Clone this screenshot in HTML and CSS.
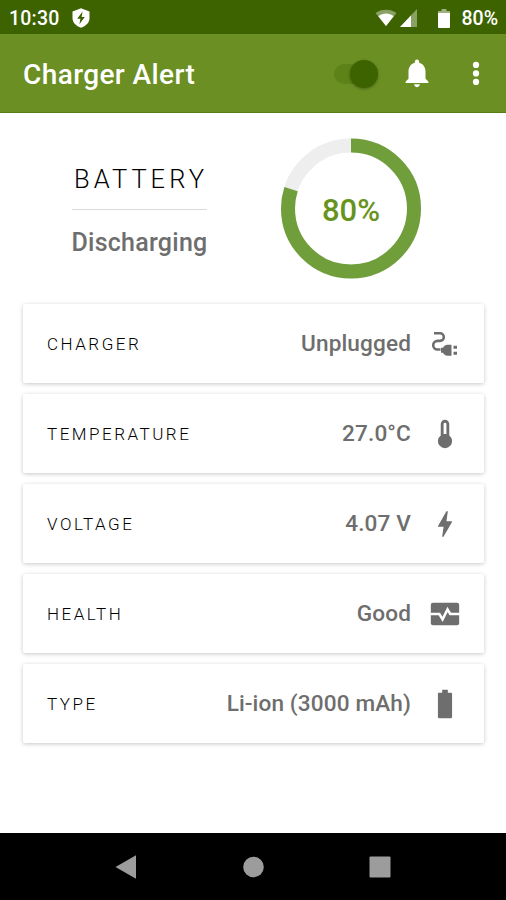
FILE: index.html
```html
<!DOCTYPE html>
<html lang="en">
<head>
    <meta charset="UTF-8">
    <meta name="viewport" content="width=device-width, initial-scale=1.0">
    <title>Charger Alert</title>
    <link rel="stylesheet" href="styles.css">
</head>
<body>
    <div class="screen">
        <div class="status-bar">
            <span class="time">10:30</span>
            <svg class="shield" viewBox="0 0 18 20">
                <path fill="#fff" d="M9 .3 17.500 3.600V10c0 4.600-3.600 8-8.500 9.800C4.100 18 .5 14.600.5 10V3.600z"/>
                <path fill="#3c6300" d="M10.600 3.600 5.200 10.800H8.400L7.400 16.200 12.800 9H9.600z"/>
            </svg>
            <div class="status-icons">
                <svg class="wifi" viewBox="0 0 22 18">
                    <path fill="#fff" opacity=".4" d="M.5 4C6-.5 16-.5 21.500 4L11 17z"/>
                    <path fill="#fff" d="M3.300 7.300C8 3.600 14 3.600 18.700 7.300L11 17z"/>
                </svg>
                <svg class="signal" viewBox="0 0 18 18">
                    <path fill="#fff" opacity=".4" d="M0 18 17 0V18z"/>
                    <path fill="#fff" d="M0 18 11 6.500V18z"/>
                </svg>
                <svg class="battery-small" viewBox="0 0 12 19">
                    <path fill="#fff" opacity=".5" d="M3.500 0h5v2H12v3H0V2h3.500z"/>
                    <path fill="#fff" d="M0 4h12v14a1 1 0 0 1-1 1H1a1 1 0 0 1-1-1z"/>
                </svg>
                <span class="level">80%</span>
            </div>
        </div>

        <header class="app-bar">
            <h1>Charger Alert</h1>
            <div class="switch"><span class="thumb"></span></div>
            <svg class="icon bell" viewBox="0 0 24 24">
                <path d="M12 22c1.100 0 2-.9 2-2h-4c0 1.100.9 2 2 2zm6-6v-5c0-3.070-1.630-5.640-4.500-6.320V4c0-.83-.67-1.500-1.500-1.500s-1.500.67-1.500 1.500v.68C7.640 5.360 6 7.920 6 11v5l-2 2v1h16v-1l-2-2z"/>
            </svg>
            <svg class="icon more" viewBox="0 0 24 24">
                <circle cx="12" cy="6.300" r="2.200"/>
                <circle cx="12" cy="12.300" r="2.200"/>
                <circle cx="12" cy="18.300" r="2.200"/>
            </svg>
        </header>

        <main>
            <section class="summary">
                <div class="state">
                    <h2>BATTERY</h2>
                    <p>Discharging</p>
                </div>
                <div class="gauge">
                    <svg viewBox="0 0 142 142">
                        <circle class="track" cx="71" cy="70.500" r="63"/>
                        <circle class="progress" cx="71" cy="70.500" r="63" pathLength="100" stroke-dasharray="80 100" transform="rotate(-90 71 70.500)"/>
                    </svg>
                    <span class="percent">80%</span>
                </div>
            </section>

            <ul class="cards">
                <li class="card">
                    <span class="label">CHARGER</span>
                    <span class="value">Unplugged</span>
                    <svg class="icon" viewBox="0 0 34 34">
                        <path fill="none" stroke="#6e6e6e" stroke-width="2.600" d="M6 6.300H12a3.800 3.800 0 0 1 0 7.600H9.500a4.300 4.300 0 0 0 0 8.600H12.500"/>
                        <path d="M13 20.800h2c1-2 2.500-3 4.500-3h4v11h-4c-2 0-3.500-1-4.500-3h-2zM25.500 18.800H29v3h-3.500zM25.500 24.800H29v3h-3.500z"/>
                    </svg>
                </li>
                <li class="card">
                    <span class="label">TEMPERATURE</span>
                    <span class="value">27.0°C</span>
                    <svg class="icon" viewBox="0 0 24 24">
                        <path d="M15 13V5a3 3 0 0 0-6 0v8a5 5 0 1 0 6 0M12 4a1 1 0 0 1 1 1v7h-2V5a1 1 0 0 1 1-1z"/>
                    </svg>
                </li>
                <li class="card">
                    <span class="label">VOLTAGE</span>
                    <span class="value">4.07 V</span>
                    <svg class="icon" viewBox="0 0 24 24">
                        <path d="M11 21h-1l1-7H7.500c-.88 0-.33-.75-.31-.78C8.480 10.940 10.420 7.540 13.010 3h1l-1 7h3.510c.4 0 .62.19.4.66C12.970 17.550 11 21 11 21z"/>
                    </svg>
                </li>
                <li class="card">
                    <span class="label">HEALTH</span>
                    <span class="value">Good</span>
                    <svg class="icon" viewBox="0 0 24 24">
                        <rect x="2" y="4" width="20" height="16" rx="1.500"/>
                        <path fill="none" stroke="#fff" stroke-width="1.800" d="M1.500 12H8L10.300 15.800 13.800 8.800 15.700 12H22.500"/>
                    </svg>
                </li>
                <li class="card">
                    <span class="label">TYPE</span>
                    <span class="value">Li-ion (3000 mAh)</span>
                    <svg class="icon" viewBox="0 0 24 24">
                        <path d="M16.200 4H14V2h-4v2H7.800C7.300 4 7 4.300 7 4.800v16.400c0 .5.300.8.800.8h8.400c.5 0 .8-.3.8-.8V4.800c0-.5-.3-.8-.8-.8z"/>
                    </svg>
                </li>
            </ul>
        </main>

        <nav class="nav-bar">
            <svg viewBox="0 0 24 24"><path d="M22 .3V23.700L1.500 12z"/></svg>
            <svg viewBox="0 0 24 24"><circle cx="12.500" cy="12" r="10.300"/></svg>
            <svg viewBox="0 0 24 24"><rect x="1.500" y="1.500" width="21" height="21" rx="1"/></svg>
        </nav>
    </div>
</body>
</html>
```

FILE: styles.css
```css
* {
    box-sizing: border-box;
}

body {
    margin: 0;
    font-family: Roboto, "Liberation Sans", sans-serif;
    background: #fff;
}

svg {
    display: block;
    flex-shrink: 0;
}

.screen {
    display: flex;
    flex-direction: column;
    height: 900px;
}

.status-bar {
    display: flex;
    align-items: center;
    height: 34px;
    padding: 2px 8px 0 9px;
    background: #3c6300;
    color: #fff;
    font-size: 19.5px;
    font-weight: 500;
}

.time {
    letter-spacing: 0.2px;
}

.shield {
    width: 18px;
    height: 20px;
    margin-left: 13px;
}

.status-icons {
    display: flex;
    align-items: center;
    margin-left: auto;
}

.wifi {
    width: 22px;
    height: 18px;
}

.signal {
    width: 18px;
    height: 18px;
    margin-left: 3px;
}

.battery-small {
    width: 12px;
    height: 19px;
    margin-left: 20px;
}

.level {
    margin-left: 11px;
}

.app-bar {
    display: flex;
    align-items: center;
    height: 79px;
    padding: 0 13px 0 23px;
    background: #6b8f23;
    border-bottom: 1px solid #587c12;
    color: #fff;
}

.app-bar h1 {
    margin: 3px auto 0 0;
    font-size: 28px;
    font-weight: 500;
    letter-spacing: 0.4px;
}

.icon {
    width: 34px;
    height: 34px;
    fill: #6e6e6e;
}

.app-bar .icon {
    fill: #fff;
}

.switch {
    display: flex;
    align-items: center;
    justify-content: flex-end;
    width: 40px;
    height: 20px;
    margin: 1px 26px 0 0;
    border-radius: 10px;
    background: #5d8217;
}

.thumb {
    width: 28px;
    height: 28px;
    margin-right: -4px;
    border-radius: 50%;
    background: #3c6300;
    box-shadow: 0 1px 3px rgba(0, 0, 0, 0.3);
}

.more {
    margin-left: 25px;
}

main {
    flex: 1;
    padding: 25px 22px 0 23px;
}

.summary {
    display: flex;
    align-items: center;
    padding-left: 49px;
}

.state {
    display: flex;
    flex-direction: column;
    align-items: center;
    width: 135px;
    padding-top: 3px;
    white-space: nowrap;
}

.state h2 {
    width: 100%;
    margin: 0;
    padding: 0 0 15px 2px;
    border-bottom: 1px solid #dadada;
    color: #000;
    font-size: 25.5px;
    font-weight: 300;
    line-height: 30px;
    letter-spacing: 4px;
}

.state p {
    margin: 18px 0 0;
    color: #6e6e6e;
    font-size: 25px;
    font-weight: 500;
    line-height: 30px;
    letter-spacing: 0.25px;
}

.gauge {
    display: grid;
    place-items: center;
    width: 142px;
    height: 142px;
    margin-left: 73px;
}

.gauge svg,
.percent {
    grid-area: 1 / 1;
}

.gauge svg {
    width: 142px;
    height: 142px;
}

.track,
.progress {
    fill: none;
    stroke: #eee;
    stroke-width: 14;
}

.progress {
    stroke: #6f9e3a;
}

.percent {
    padding-top: 2px;
    color: #68941d;
    font-size: 31px;
    font-weight: 500;
}

.cards {
    display: flex;
    flex-direction: column;
    gap: 11px;
    margin: 24px 0 0;
    padding: 0;
    list-style: none;
}

.card {
    display: flex;
    align-items: center;
    height: 79px;
    padding: 0 22px 0 24px;
    border-radius: 2px;
    background: #fff;
    box-shadow: 0 1px 4px rgba(0, 0, 0, 0.22);
}

.label {
    margin-top: 1px;
    color: #000;
    font-size: 17px;
    font-weight: 300;
    letter-spacing: 2.5px;
}

.value {
    margin: 0 17px 0 auto;
    color: #6e6e6e;
    font-size: 22.6px;
    font-weight: 500;
    letter-spacing: 0.12px;
}

.nav-bar {
    display: flex;
    align-items: center;
    justify-content: center;
    gap: 103px;
    height: 67px;
    background: #000;
}

.nav-bar svg {
    width: 24px;
    height: 24px;
    fill: #9c9c9c;
}
```
